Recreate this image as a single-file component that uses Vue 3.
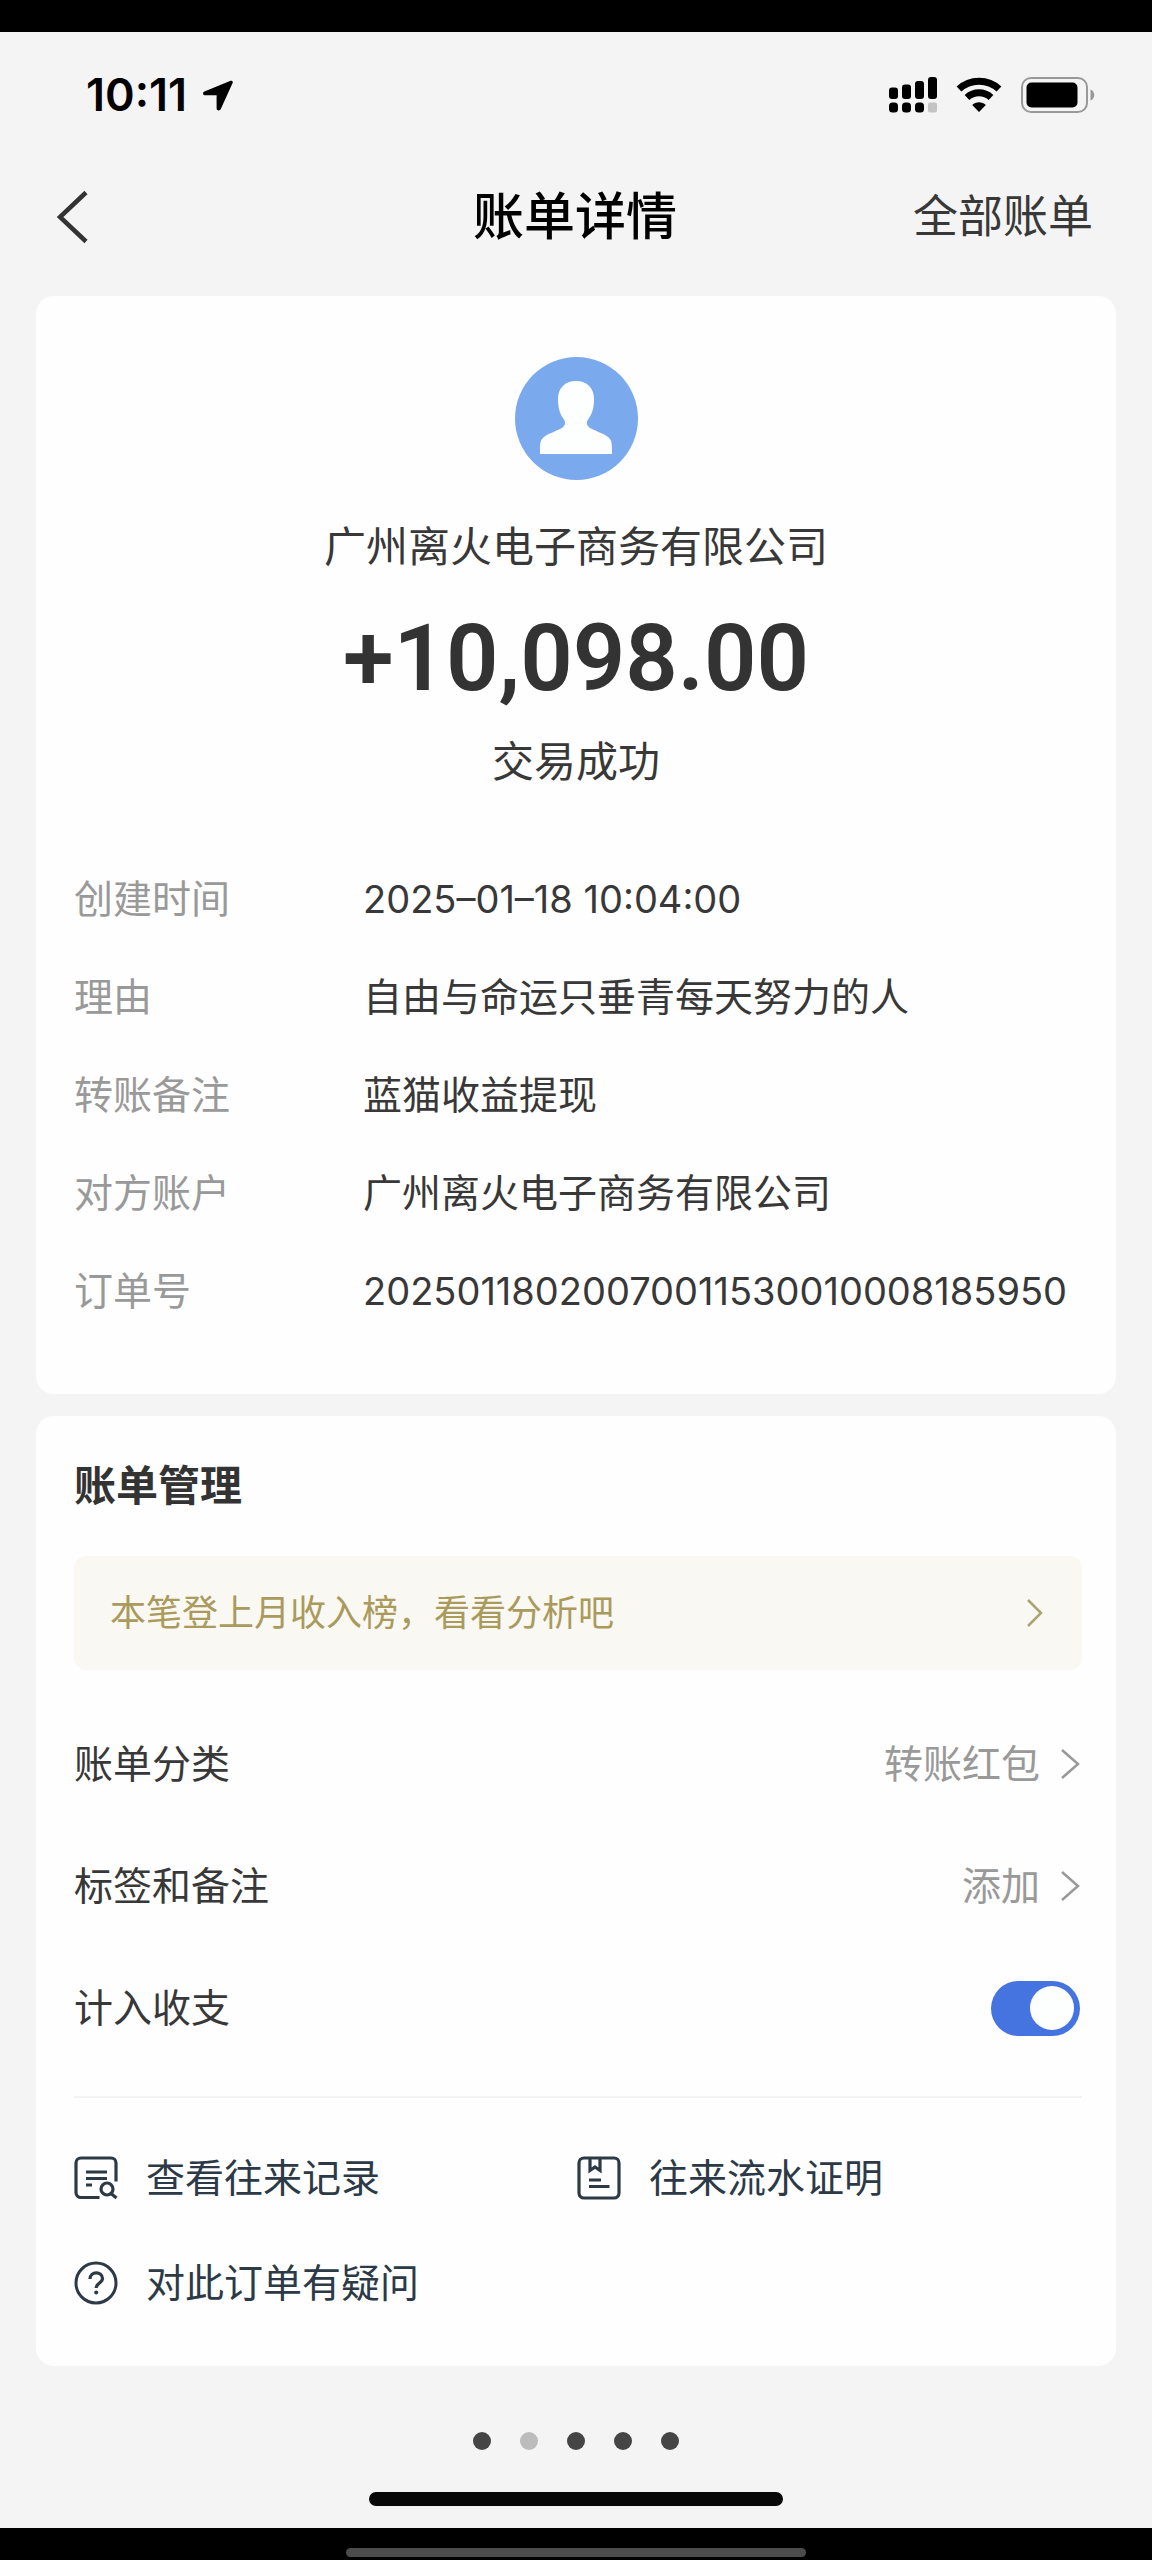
<script setup>
import { ref } from 'vue'

const details = [
  { label: '创建时间', value: '2025–01–18 10:04:00', numeric: true },
  { label: '理由', value: '自由与命运只垂青每天努力的人' },
  { label: '转账备注', value: '蓝猫收益提现' },
  { label: '对方账户', value: '广州离火电子商务有限公司' },
  { label: '订单号', value: '20250118020070011530010008185950', numeric: true },
]

const settings = [
  { label: '账单分类', value: '转账红包' },
  { label: '标签和备注', value: '添加' },
]

const counted = ref(true)
const activeDot = 1
</script>

<template>
  <div class="page">
    <div class="bezel-top"></div>

    <div class="status-bar">
      <div class="clock">
        <span>10:11</span>
        <svg class="location" viewBox="0 0 30 31" aria-hidden="true">
          <path d="M27.600.8 1.400 11.500c-2 .9-1.700 3.800.7 3.800H13.600V28.300c0 2.600 3.200 3 4.200.8L29.600 3C30.300 1.400 29 .2 27.600.8Z" fill="#000" />
        </svg>
      </div>
      <div class="indicators">
        <svg width="48" height="36" viewBox="0 0 48 36" aria-hidden="true">
          <rect x="0" y="10.500" width="9" height="11.500" rx="3" />
          <rect x="13" y="7.500" width="9" height="14.500" rx="3" />
          <rect x="26" y="4" width="9" height="18" rx="3" />
          <rect x="39" y="0" width="9" height="22" rx="3" />
          <rect x="0" y="25.500" width="9" height="10" rx="3.500" />
          <rect x="13" y="25.500" width="9" height="10" rx="3.500" />
          <rect x="26" y="25.500" width="9" height="10" rx="3.500" />
          <rect x="39" y="25.500" width="9" height="10" rx="2" fill="#c4c4c4" />
        </svg>
        <svg width="46" height="36" viewBox="0 0 46 36" aria-hidden="true">
          <path d="M3 12C14 1.500 32 1.500 43 12" fill="none" stroke="#000" stroke-width="7" />
          <path d="M11 20.500C18 14.300 28 14.300 35 20.500" fill="none" stroke="#000" stroke-width="7" />
          <path d="M23 35 16.200 28C20 24.400 26 24.400 29.800 28Z" />
        </svg>
        <svg width="74" height="36" viewBox="0 0 74 36" aria-hidden="true">
          <rect x="1" y="1" width="65" height="34" rx="9" fill="none" stroke="#999" stroke-width="2" />
          <rect x="5.500" y="5.500" width="51" height="25" rx="5" />
          <path d="M69.500 12.500c5 1.500 5 9.500 0 11Z" fill="#999" />
        </svg>
      </div>
    </div>

    <header class="nav">
      <button class="back" type="button" aria-label="返回">
        <svg width="32" height="54" viewBox="0 0 32 54" aria-hidden="true">
          <path d="M29 2.500 3 27l26 24.500" fill="none" stroke="#333" stroke-width="4.500" />
        </svg>
      </button>
      <h1>账单详情</h1>
      <a class="all" href="#all">全部账单</a>
    </header>

    <main>
      <section class="card summary">
        <svg class="avatar" viewBox="0 0 123 123" aria-hidden="true">
          <circle cx="61.500" cy="61.500" r="61.500" fill="#7aa9ee" />
          <path d="M61 24c-11 0-18 7-18 18 0 9 2 15 5 19 3 4 3 7-1 10-5 3-13 5-18 9-4 3-4 6-4 17h72c0-11 0-14-4-17-5-4-13-6-18-9-4-3-4-6-1-10 3-4 5-10 5-19 0-11-7-18-18-18Z" fill="#fdfefe" />
        </svg>
        <p class="party">广州离火电子商务有限公司</p>
        <p class="amount">+10,098.00</p>
        <p class="state">交易成功</p>

        <dl class="details">
          <div v-for="item in details" :key="item.label" class="detail">
            <dt>{{ item.label }}</dt>
            <dd :class="{ numeric: item.numeric }">{{ item.value }}</dd>
          </div>
        </dl>
      </section>

      <section class="card manage">
        <h2>账单管理</h2>

        <a class="banner" href="#analysis">
          <span>本笔登上月收入榜，看看分析吧</span>
          <svg width="18" height="30" viewBox="0 0 18 30" aria-hidden="true">
            <path d="M2 2l13 13L2 28" fill="none" stroke="#aaa471" stroke-width="2.500" />
          </svg>
        </a>

        <div class="settings">
          <a v-for="item in settings" :key="item.label" class="setting" href="#edit">
            <span>{{ item.label }}</span>
            <span class="value">
              {{ item.value }}
              <svg width="20" height="32" viewBox="0 0 20 32" aria-hidden="true">
                <path d="M2 2l16 14L2 30" fill="none" stroke="#999" stroke-width="2.500" />
              </svg>
            </span>
          </a>
          <div class="setting">
            <label for="counted">计入收支</label>
            <input id="counted" v-model="counted" class="toggle" type="checkbox" role="switch" />
          </div>
        </div>

        <nav class="links">
          <a href="#records">
            <svg width="44" height="44" viewBox="0 0 44 44" aria-hidden="true">
              <g fill="none" stroke="#2c3a47" stroke-width="3.200">
                <path d="M25.500 41.500H7a5 5 0 0 1-5-5V7a5 5 0 0 1 5-5h30a5 5 0 0 1 5 5v18.500" />
                <path d="M12 16h21M12 22.500h21M12 29h6" />
                <circle cx="33" cy="33" r="6" />
                <path d="M37 37.500l5.500 4.500" />
              </g>
            </svg>
            <span>查看往来记录</span>
          </a>
          <a href="#proof">
            <svg width="44" height="44" viewBox="0 0 44 44" aria-hidden="true">
              <g fill="none" stroke="#2c3a47" stroke-width="3.200">
                <rect x="2" y="2" width="40" height="40" rx="5" />
                <path d="M13 2v12.500l5-3.500 5 3.500V2M12 24h12M12 30.500h20.500" />
              </g>
            </svg>
            <span>往来流水证明</span>
          </a>
          <a href="#help">
            <svg width="44" height="44" viewBox="0 0 44 44" aria-hidden="true">
              <circle cx="22" cy="22" r="20" fill="none" stroke="#2c3a47" stroke-width="3" />
              <path d="M16 18c0-8 12.500-8 12.500-.5 0 4.500-6.300 4.500-6.300 9.500" fill="none" stroke="#2c3a47" stroke-width="3.200" />
              <circle cx="22.200" cy="31.500" r="2" fill="#2c3a47" />
            </svg>
            <span>对此订单有疑问</span>
          </a>
        </nav>
      </section>
    </main>

    <footer>
      <div class="dots">
        <i v-for="n in 5" :key="n" :class="{ active: n - 1 === activeDot }"></i>
      </div>
      <div class="home-bar"></div>
    </footer>

    <div class="bezel-bottom">
      <div class="gesture-bar"></div>
    </div>
  </div>
</template>

<style>
body {
  margin: 0;
  background: #000;
}
</style>

<style scoped>
.page {
  background: #f4f4f4;
  color: #383838;
  font-family: Inter, "Noto Sans CJK SC", sans-serif;
  font-size: 39px;
  line-height: 60px;
}

h1,
h2,
p,
dl,
dd {
  margin: 0;
}

a {
  color: inherit;
  text-decoration: none;
}

svg {
  display: block;
  flex: none;
}

.bezel-top {
  height: 32px;
  background: #000;
}

.status-bar {
  display: flex;
  align-items: center;
  justify-content: space-between;
  padding: 33px 57px 33px 86px;
  color: #000;
}

.clock {
  display: flex;
  align-items: center;
  gap: 16px;
  font-size: 45px;
  font-weight: 600;
}

.location {
  width: 30px;
  height: 31px;
}

.indicators {
  display: flex;
  align-items: center;
  gap: 19px;
}

.nav {
  display: grid;
  grid-template-columns: 1fr auto 1fr;
  align-items: center;
  padding: 29px 59px 27px 57px;
}

.back {
  justify-self: start;
  padding: 0;
  border: 0;
  background: none;
}

h1 {
  color: #000;
  font-size: 51px;
  font-weight: 500;
}

.all {
  justify-self: end;
  font-size: 45px;
}

main {
  display: flex;
  flex-direction: column;
  gap: 22px;
  padding: 22px 36px 0;
}

.card {
  border-radius: 18px;
  background: #fefefe;
}

.summary {
  display: flex;
  flex-direction: column;
  align-items: center;
  padding: 61px 38px 54px;
}

.avatar {
  width: 123px;
  height: 123px;
}

.party {
  margin-top: 37px;
  font-size: 42px;
}

.state {
  font-size: 42px;
}

.amount {
  margin: 32px 0 23px;
  color: #333;
  font-family: Roboto, sans-serif;
  font-size: 92px;
  font-weight: 600;
  line-height: 100px;
}

.details {
  align-self: stretch;
  margin-top: 58px;
}

.detail {
  display: grid;
  grid-template-columns: 289px 1fr;
  padding: 19px 0;
}

.detail dt {
  color: #999;
}

.numeric {
  font-size: 38px;
}

.manage {
  padding: 40px 34px 30px 38px;
}

h2 {
  color: #333;
  font-size: 42px;
  font-weight: 700;
}

.banner {
  display: flex;
  align-items: center;
  justify-content: space-between;
  margin-top: 40px;
  padding: 27px 38px 27px 36px;
  border-radius: 12px;
  background: #f9f8f3;
  color: #aa9a5c;
  font-size: 36px;
}

.settings {
  padding: 33px 0 27px;
  border-bottom: 2px solid #f3f3f3;
}

.setting {
  display: flex;
  align-items: center;
  justify-content: space-between;
  padding: 31px 2px 31px 0;
}

.value {
  display: flex;
  align-items: center;
  gap: 20px;
  color: #999;
}

.toggle {
  display: flex;
  align-items: center;
  width: 89px;
  height: 55px;
  margin: 0;
  padding: 0 6px;
  box-sizing: border-box;
  appearance: none;
  border-radius: 28px;
  background: #ccc;
}

.toggle::before {
  content: "";
  width: 44px;
  height: 44px;
  border-radius: 50%;
  background: #fcfffe;
}

.toggle:checked {
  justify-content: flex-end;
  background: #4573e0;
}

.links {
  display: grid;
  grid-template-columns: 1fr 1fr;
  padding: 28px 2px 0 0;
  color: #2c3a47;
}

.links a {
  display: flex;
  align-items: center;
  gap: 28px;
  padding: 22px 0 23px;
}

footer {
  display: flex;
  flex-direction: column;
  align-items: center;
  gap: 42px;
  padding: 66px 0 22px;
}

.dots {
  display: flex;
  gap: 29px;
}

.dots i {
  width: 18px;
  height: 18px;
  border-radius: 50%;
  background: #454545;
}

.dots .active {
  background: #bcbcbc;
}

.home-bar {
  width: 36%;
  height: 14px;
  border-radius: 7px;
  background: #080808;
}

.bezel-bottom {
  display: flex;
  justify-content: center;
  padding: 20px 0 3px;
  background: #000;
}

.gesture-bar {
  width: 40%;
  height: 9px;
  border-radius: 5px;
  background: #4c4c4c;
}
</style>
